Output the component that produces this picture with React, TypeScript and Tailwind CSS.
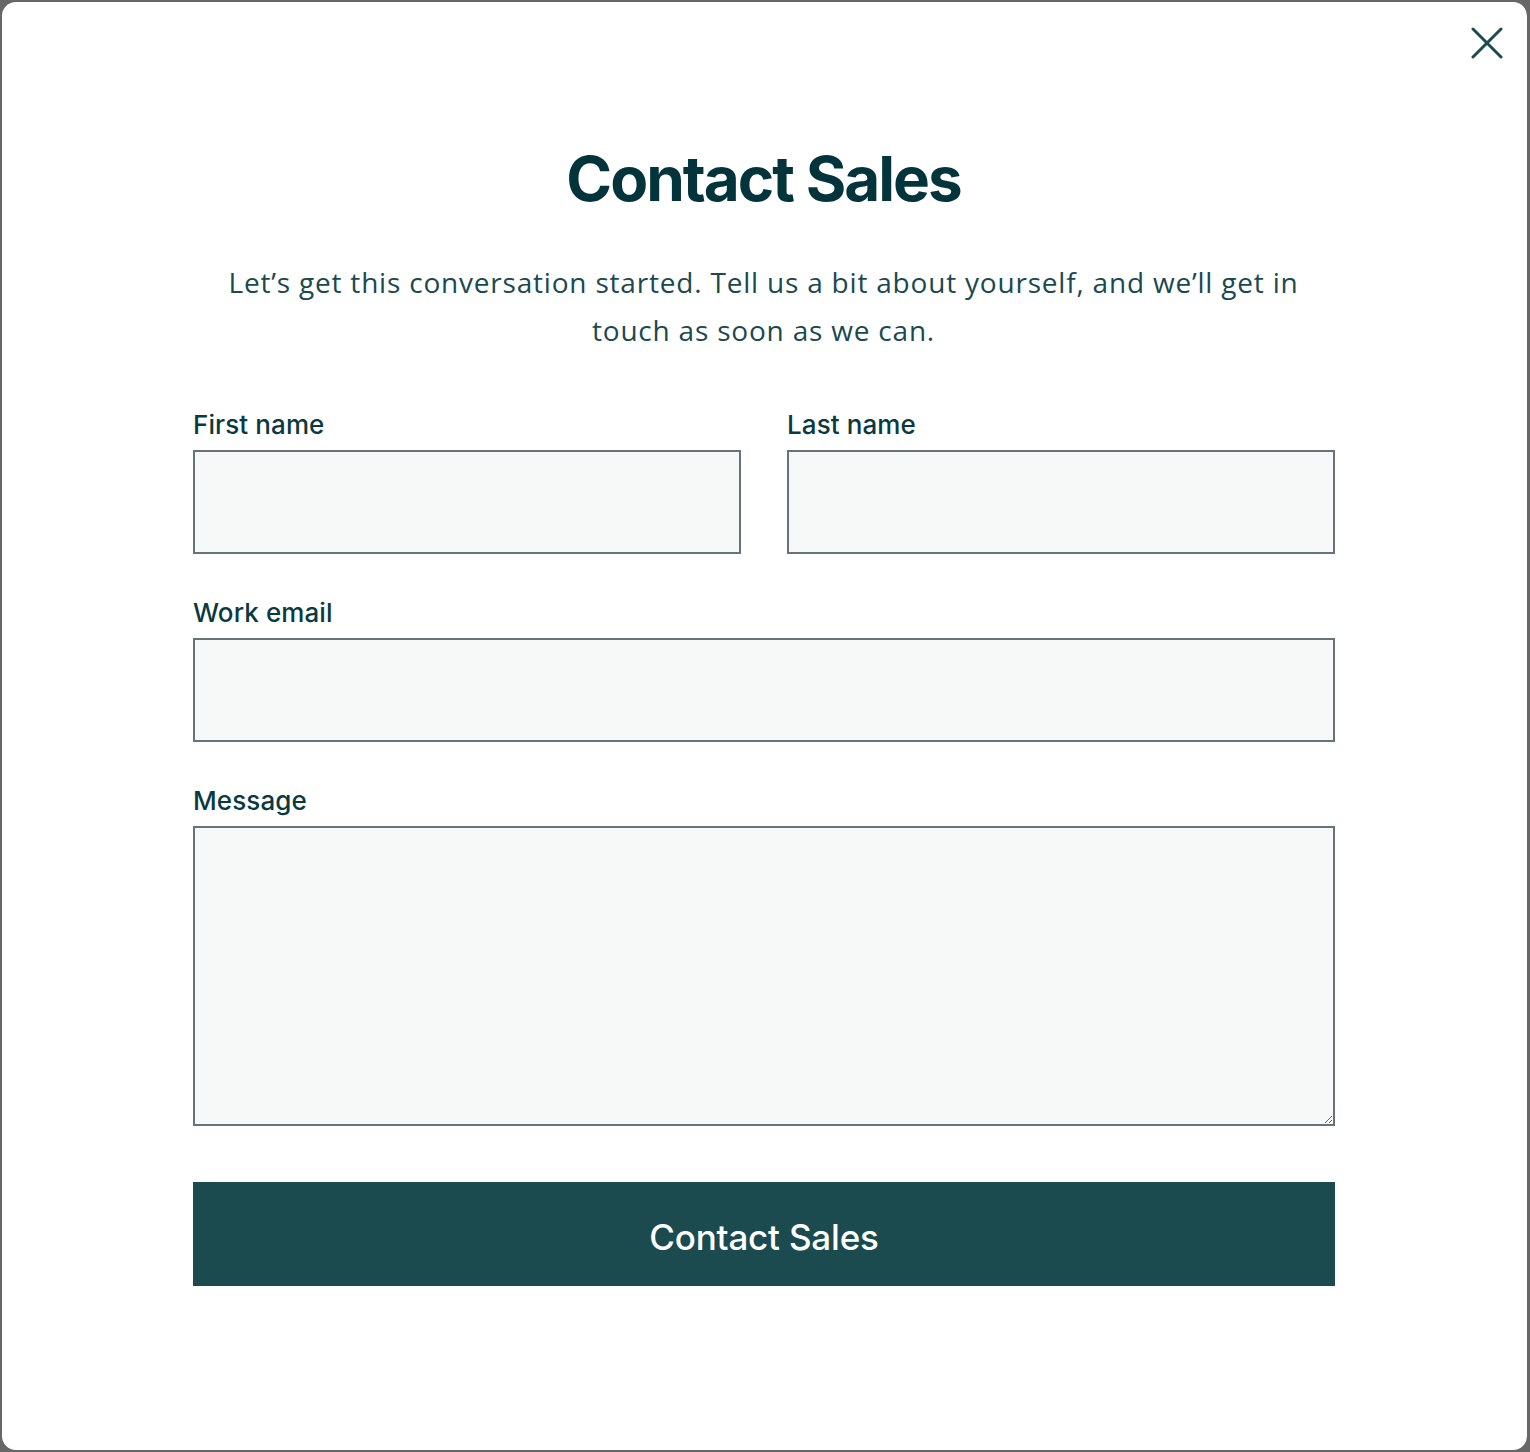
import React from "react";

function Label({ children }: { children: React.ReactNode }) {
  return (
    <label className="text-[26px] leading-[34px] font-medium text-[#0a3a40] tracking-[0.1px] mb-[8px]">{children}</label>
  );
}

function Field({ label, className = "" }: { label: string; className?: string }) {
  return (
    <div className={"flex flex-col " + className}>
      <Label>{label}</Label>
      <input className="h-[104px] w-full border-2 border-[#67737b] bg-[#f7f8f8] outline-none" />
    </div>
  );
}

export default function App() {
  return (
    <div className="w-[1530px] h-[1452px] bg-[#676767] pt-[2px] pl-[2px] pr-[3px] pb-[2px]" style={{ fontFamily: "Inter, 'Open Sans', sans-serif" }}>
      <div className="relative w-full h-full bg-white rounded-[14px] flex flex-col items-center">
        <button className="absolute right-[24px] top-[25px] w-[32px] h-[32px] flex items-center justify-center" aria-label="Close">
          <svg width="32" height="32" viewBox="0 0 32 32" fill="none">
            <path d="M2 2 L30 30 M30 2 L2 30" stroke="#1b4b4f" strokeWidth="3" strokeLinecap="round" />
          </svg>
        </button>
        <h1 className="mt-[134px] mr-[2px] text-[62px] leading-[86px] font-bold text-[#04343b] tracking-[-2px]">Contact Sales</h1>
        <p
          className="mt-[36px] mr-[2px] text-center text-[28px] leading-[48px] text-[#1a4a4f] w-[1141px] tracking-[0.8px]"
          style={{ fontFamily: "'Open Sans', sans-serif" }}
        >
          Let’s get this conversation started. Tell us a bit about yourself, and we’ll get in
          <br />
          touch as soon as we can.
        </p>
        <form className="mt-[54px] mr-[1px] w-[1142px] flex flex-col">
          <div className="grid grid-cols-2 gap-[46px]">
            <Field label="First name" />
            <Field label="Last name" />
          </div>
          <Field label="Work email" className="mt-[42px]" />
          <div className="flex flex-col mt-[42px]">
            <Label>Message</Label>
            <textarea className="h-[300px] w-full border-2 border-[#67737b] bg-[#f7f8f8] outline-none" />
          </div>
          <button type="button" className="mt-[56px] h-[104px] w-full bg-[#1b4b4f] text-white text-[35px] font-medium tracking-[-0.2px] pt-[6px]">
            Contact Sales
          </button>
        </form>
      </div>
    </div>
  );
}
